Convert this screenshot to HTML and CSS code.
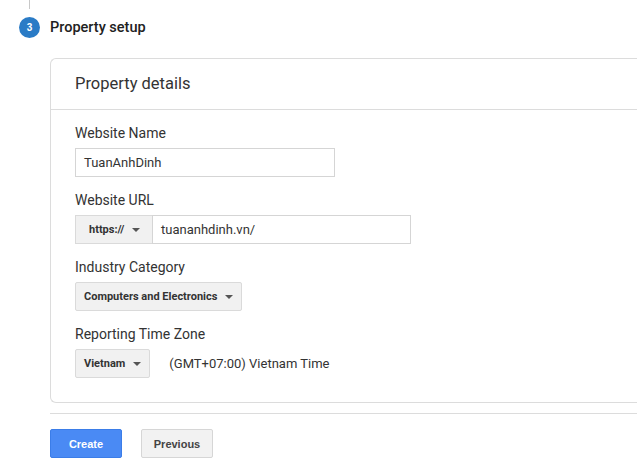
FILE: index.html
```html
<!DOCTYPE html>
<html>
<head>
<meta charset="utf-8">
<link rel="stylesheet" href="styles.css">
</head>
<body>
<div class="page">
  <div class="rail"></div>
  <div class="step">
    <span class="num">3</span>
    <span class="step-title">Property setup</span>
  </div>
  <div class="body">
    <div class="card">
      <div class="card-head">Property details</div>
      <div class="card-body">
        <div class="field">
          <div class="label">Website Name</div>
          <div class="input name">TuanAnhDinh</div>
        </div>
        <div class="field">
          <div class="label">Website URL</div>
          <div class="url-row">
            <div class="select proto">https:// <span class="caret"></span></div>
            <div class="input url">tuananhdinh.vn/</div>
          </div>
        </div>
        <div class="field">
          <div class="label">Industry Category</div>
          <div class="select">Computers and Electronics <span class="caret"></span></div>
        </div>
        <div class="field">
          <div class="label">Reporting Time Zone</div>
          <div class="tz-row">
            <div class="select">Vietnam <span class="caret"></span></div>
            <span class="tz">(GMT+07:00) Vietnam Time</span>
          </div>
        </div>
      </div>
    </div>
    <div class="divider"></div>
    <div class="actions">
      <button class="btn primary">Create</button>
      <button class="btn">Previous</button>
    </div>
  </div>
</div>
</body>
</html>
```

FILE: styles.css
```css
* { box-sizing: border-box; }
html, body { margin: 0; padding: 0; background: #fff; overflow: hidden; }
body { font-family: Roboto, "Liberation Sans", sans-serif; color: #333; }
.page { width: 637px; height: 466px; position: relative; }
.rail { width: 1px; height: 9px; margin-left: 29px; background: #c8c8c8; }
.step { display: flex; align-items: center; height: 36px; margin-left: 19px; }
.num {
  width: 21px; height: 21px; border-radius: 50%;
  background: #2a7bc6; color: #fff;
  font: bold 10px "Liberation Sans", Arial, sans-serif;
  display: flex; align-items: center; justify-content: center;
}
.step-title { margin-left: 10px; font-size: 14.5px; font-weight: 500; color: #212121; }
.body { margin-left: 50px; padding-top: 13px; }
.card {
  border: 1px solid #dcdcdc; border-right: none;
  border-radius: 6px 0 0 6px; height: 345px;
}
.card-head {
  height: 51px; border-bottom: 1px solid #dcdcdc;
  padding: 15px 0 0 24px; font-size: 16.5px; color: #333;
}
.card-body { padding: 15px 0 0 24px; }
.field { margin-bottom: 15px; }
.label { font-size: 14px; color: #333; height: 17px; line-height: 17px; margin-bottom: 6px; }
.input {
  height: 29px; border: 1px solid #d5d5d5; font-size: 13px; color: #333;
  padding: 0 8px; line-height: 27px; background: #fff;
}
.name { width: 260px; }
.url-row { display: flex; }
.url { width: 259px; padding-left: 8px; }
.select {
  display: inline-flex; align-items: center; height: 29px;
  background: #f1f1f1; border: 1px solid #dadada; border-radius: 2px;
  font-family: Roboto, "Liberation Sans", sans-serif; font-size: 11px; font-weight: 700; color: #333;
  padding: 0 8px;
}
.proto { width: 77px; padding-left: 13px; border-radius: 0; border-right: none; }
.caret {
  width: 0; height: 0; margin-left: 8px; margin-top: 1px;
  border-left: 4px solid transparent; border-right: 4px solid transparent;
  border-top: 4px solid #555;
}
.tz-row { display: flex; align-items: center; }
.tz { margin-left: 19px; font-size: 13px; color: #333; }
.divider { height: 1px; background: #dcdcdc; margin-top: 10px; }
.actions { display: flex; gap: 19px; padding-top: 15px; }
.btn {
  height: 29px; width: 72px; border-radius: 2px;
  font: bold 11px "Liberation Sans", Arial, sans-serif; color: #444;
  background: #f2f2f2; border: 1px solid #d6d6d6; padding: 0;
}
.btn.primary { background: #4a8af4; border-color: #3b7de8; color: #fff; }
```
